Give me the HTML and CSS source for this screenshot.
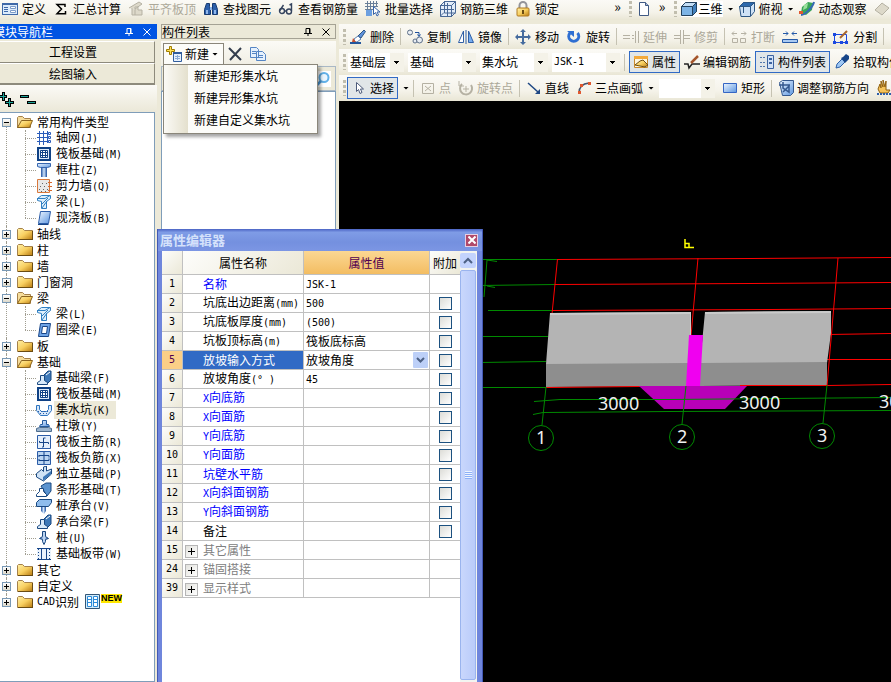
FILE: index.html
```html
<!DOCTYPE html>
<html lang="zh-CN">
<head>
    <meta charset="UTF-8">
    <meta name="viewport" content="width=device-width, initial-scale=1.0">
    <title>钢筋算量 - 绘图输入</title>
    <link rel="stylesheet" href="styles.css">
</head>
<body>
    <!-- 图标 -->
    <svg class="sprite" aria-hidden="true">
        <defs>
            <linearGradient id="gold" x2="1" y2="1"><stop offset="0" stop-color="#fff0a8"/><stop offset=".5" stop-color="#f8cf60"/><stop offset="1" stop-color="#b87a10"/></linearGradient>
            <linearGradient id="blue" x2="1" y2="1"><stop offset="0" stop-color="#eef6ff"/><stop offset="1" stop-color="#5c96e0"/></linearGradient>
            <linearGradient id="deep" x2="1"><stop offset="0" stop-color="#1c4fa0"/><stop offset=".5" stop-color="#cfe4fb"/><stop offset="1" stop-color="#1c4fa0"/></linearGradient>
        </defs>
        <symbol id="define" viewBox="0 0 16 16"><path fill="#3f69a8" d="M0 2h16v12H0z"/><path fill="#dcebfb" d="M1 4h14v9H1z"/><path stroke="#3f69a8" d="M2 6.500h4M2 8.500h4M2 10.500h4M8 6.500h6M8 10.500h6"/><path fill="#fff" stroke="#7d9cc8" d="M8.500 5.500h5v2h-5zM8.500 9.500h5v2h-5z"/></symbol>
        <symbol id="sum" viewBox="0 0 16 16"><path fill="none" stroke="#000" stroke-width="1.500" d="M12 6V3.500H4L8.500 8 4 12.800h8.500V10"/></symbol>
        <symbol id="flush" viewBox="0 0 16 16"><path fill="#ddd9ca" stroke="#b5b1a3" d="M1 7l10-6 3 2-7 5M4 7v7h10V9h-4V6H7v3M7 9v5"/></symbol>
        <symbol id="find" viewBox="0 0 16 16"><path fill="#2c5faa" stroke="#173a70" d="M3.500 2.500h3v3l1 3v5h-6v-5zM9.500 2.500h3l2 6v5h-5v-5z"/><path fill="#8fb6ea" d="M3 9h2v4H3zM11 9h2v4h-2zM7 6h2v3H7z"/></symbol>
        <symbol id="glasses" viewBox="0 0 16 16"><g fill="none" stroke="#34435e" stroke-width="1.400"><circle cx="4" cy="10" r="2.500"/><circle cx="11" cy="10.500" r="2.500"/><path d="M1.500 10l4-6M6.500 10h2M13.500 10V3l-2 1"/></g></symbol>
        <symbol id="batch" viewBox="0 0 16 16"><path fill="none" stroke="#6a7f98" d="M0 2.500h13M0 5.500h13M0 8.500h8M2.500 0v12M5.500 0v12M8.500 0v6M11.500 0v6"/><path fill="#6c9fe0" d="M1 9h6v6H1z"/><path fill="#fff" stroke="#3864a8" d="M8.500 5.500v8l2-2 1.500 3.500 1.500-1-1.500-3h3z"/></symbol>
        <symbol id="rebar3d" viewBox="0 0 16 16"><path fill="#e3edf9" stroke="#476795" d="M.5 4.500l4-4h11v11l-4 4H.5z"/><path fill="none" stroke="#476795" d="M0 4.500h11.500V16M11.500 4.500l4-4M4.500 0v12H16M0 15.500l4-4M7.500 2v14M0 8.500h14"/></symbol>
        <symbol id="lock" viewBox="0 0 16 16"><path fill="none" stroke="#94949a" stroke-width="2" d="M4.500 8V4.500a3.500 3.500 0 0 1 7 0V8"/><rect x="2" y="7" width="12" height="8" rx="1" fill="url(#gold)" stroke="#b07a20"/><path fill="#6b4c12" d="M7 9h2v4H7z"/></symbol>
        <symbol id="page" viewBox="0 0 16 16"><path fill="#fff" stroke="#405a84" d="M3.500 1.500h6l3 3v10h-9z"/><path fill="#a9bbd8" stroke="#405a84" d="M9.500 1.500v3h3"/></symbol>
        <symbol id="cube" viewBox="0 0 16 16"><path fill="#7db4e6" stroke="#24425f" d="M.5 5.500l4-4h11v9l-4 4H.5z"/><path fill="#4381bd" stroke="#24425f" d="M11.500 5.500l4-4v9l-4 4z"/><path fill="#c3def6" stroke="#24425f" d="M.5 5.500l4-4h11l-4 4z"/></symbol>
        <symbol id="top" viewBox="0 0 16 16"><path fill="#cfe2f6" stroke="#2c5684" d="M.5 5.500l4-4h11v9l-4 5H2z"/><path fill="#2c68ac" stroke="#2c5684" d="M.5 5.500l4-4h11l-4 4z"/><path fill="none" stroke="#2c5684" d="M11.500 5.500V15M4.500 6v6"/></symbol>
        <symbol id="orbit" viewBox="0 0 16 16"><path fill="#3aa657" d="M3 6l6-5 5 1-1 7-6 5-5-2z"/><path fill="#9be09c" d="M5 4l4-2-1 5-4 2z"/><path fill="none" stroke="#3569b4" stroke-width="2" d="M2 14C6 14 14 6 15 1"/><path fill="#e05a30" d="M0 10h4v3H0z"/></symbol>
        <symbol id="grey" viewBox="0 0 16 16"><path fill="#ddd9ca" stroke="#b5b1a3" d="M1 9l7-7 7 5-7 7z"/></symbol>
        <symbol id="erase" viewBox="0 0 16 16"><path fill="#5f92dd" stroke="#2c5684" d="M8 7l6-6 1.500 1.500L11 9z"/><path fill="#fff" stroke="#5a7fb0" d="M4 10l4-3 3 3-4 3H5z"/><path fill="#c9502e" d="M3 9l3 4H2z"/><path stroke="#24569c" stroke-width="2" d="M0 14h11"/></symbol>
        <symbol id="copyobj" viewBox="0 0 16 16"><g fill="#e9edf2" stroke="#5c6f88"><circle cx="3" cy="3.500" r="2.500"/><circle cx="8" cy="12" r="2"/><circle cx="12.500" cy="11" r="3"/></g><path fill="none" stroke="#1d4f9b" d="M8 3.500h4V7M10.500 5.500l1.500 2 1.500-2"/></symbol>
        <symbol id="mirror" viewBox="0 0 16 16"><path fill="#fff" stroke="#2f5fa6" d="M5.500 2v11.500h-5z"/><path fill="#78aef0" stroke="#2f5fa6" d="M10.500 2v11.500h5z"/><path stroke="#2f5fa6" d="M8 1v14"/></symbol>
        <symbol id="move" viewBox="0 0 16 16"><path fill="#456b9e" d="M8 0l3 3H9v4h4V5l3 3-3 3V9H9v4h2l-3 3-3-3h2V9H3v2L0 8l3-3v2h4V3H5z"/></symbol>
        <symbol id="rotate" viewBox="0 0 16 16"><path fill="none" stroke="#2f6fd2" stroke-width="3" d="M4 4a5 5 0 1 0 7.500 0"/><path fill="#2f6fd2" d="M1 2h7v6z"/></symbol>
        <symbol id="extend" viewBox="0 0 16 16"><path fill="none" stroke="#b5b1a3" d="M0 6.500h7M0 9.500h7M9 6.500h2M9 9.500h2M12.500 2v12M15.500 2v12"/></symbol>
        <symbol id="trim" viewBox="0 0 16 16"><path fill="none" stroke="#b5b1a3" d="M0 6.500h6M0 9.500h6M6.500 1v14M9.500 1v14M10 6.500h6M10 9.500h6"/></symbol>
        <symbol id="break" viewBox="0 0 16 16"><path fill="none" stroke="#b5b1a3" d="M1 4.500h5M3 2.500l-2 2 2 2M10 4.500h5M13 2.500l2 2-2 2M1.500 9.500h5v4h-5zM9.500 9.500h5v4h-5z"/></symbol>
        <symbol id="join" viewBox="0 0 16 16"><path fill="none" stroke="#2459a8" d="M1 4.500h5M4 2.500l2 2-2 2M10 4.500h5M12 2.500l-2 2 2 2"/><path fill="#a9caf2" stroke="#2459a8" d="M.5 10.500h15v3H.5z"/></symbol>
        <symbol id="split" viewBox="0 0 16 16"><path fill="none" stroke="#1a48e0" d="M1.500 5.500h12v8h-12z"/><path fill="#1a48e0" d="M0 4h3v3H0zM0 12h3v3H0zM12 12h3v3h-3zM7 12h3v3H7z"/><path stroke="#a8662d" stroke-width="2" d="M7 9l7-7"/></symbol>
        <symbol id="prop" viewBox="0 0 16 16"><path fill="#fff7df" stroke="#c98a2c" d="M1.500 2.500h13v11h-13z"/><path fill="#f3aa3c" d="M1 2h14v3H1z"/><path fill="url(#gold)" stroke="#6d4d13" d="M2 11l5-4 3-1 5 5-3 2z"/></symbol>
        <symbol id="editbar" viewBox="0 0 16 16"><path fill="none" stroke="#222" stroke-width="1.500" d="M0 10h4l1 4 3-4h8"/><path stroke="#a5562c" stroke-width="2.500" d="M7 9l7-7"/></symbol>
        <symbol id="list" viewBox="0 0 16 16"><path fill="none" stroke="#5077ad" stroke-dasharray="2 1" d="M1 3.500h6M1 8.500h6M1 12.500h6"/><path fill="#cfe1f8" stroke="#3a62a0" d="M8.500 1.500h6v13h-6z"/><path stroke="#3a62a0" stroke-width="2" d="M10 5h3M10 9h3"/></symbol>
        <symbol id="pick" viewBox="0 0 16 16"><path fill="#9fc8f4" stroke="#2b5fa8" d="M2 14l1-4 5-5 3 3-5 5z"/><path fill="#174588" d="M7 4l2-1 3-3 3 2v3l-3 3-1 1z"/></symbol>
        <symbol id="arrow" viewBox="0 0 16 16"><path fill="#fff" stroke="#4d5b7a" d="M5.500 2.500v9l2-2 1.500 4 2-1-1.500-3.500h3z"/></symbol>
        <symbol id="point" viewBox="0 0 16 16"><path fill="none" stroke="#b5b1a3" d="M2.500 3.500h11v10h-11zM5 6l6 5M11 6l-6 5"/></symbol>
        <symbol id="rotpoint" viewBox="0 0 16 16"><path fill="none" stroke="#b5b1a3" stroke-width="2" d="M4 4a6 6 0 1 0 9 1"/><path fill="none" stroke="#b5b1a3" d="M1 1v5h5M8 6v6M5 9h6"/></symbol>
        <symbol id="line" viewBox="0 0 16 16"><path stroke="#1e4784" stroke-width="1.500" d="M2 3l10 9"/><path fill="#1e4784" d="M14 14H9l5-5z"/></symbol>
        <symbol id="arc" viewBox="0 0 16 16"><path fill="none" stroke="#46536c" stroke-width="1.500" d="M3 13q0-9 10-10"/><path fill="#e0582f" d="M2 11h3v3H2zM4 4h3v3H4zM12 2h3v3h-3z"/></symbol>
        <symbol id="rect" viewBox="0 0 16 16"><path fill="url(#blue)" stroke="#3465c4" d="M1.500 3.500h13v9h-13z"/></symbol>
        <symbol id="dir" viewBox="0 0 16 16"><path fill="url(#blue)" stroke="#34588e" d="M1.500 2.500l3-2h11v12l-3 3h-8z"/><path fill="none" stroke="#34588e" stroke-width="1.500" d="M1 5h11M5 2v6l6 4V6L5 12"/></symbol>
        <symbol id="hand" viewBox="0 0 16 16"><path fill="#f6c35a" stroke="#8f6010" d="M2 9l2-5 1 4V1l2 6V0l2 7 1-6v9h4l-2 3H4z"/><path stroke="#2e5ea8" stroke-dasharray="2 1" stroke-width="2" d="M1 14h14"/></symbol>
        <symbol id="pin" viewBox="0 0 8 8"><path fill="none" stroke="currentColor" d="M2 5V.5h4V5M5.500 1v4M0 5.500h8M4 6v2"/></symbol>
        <symbol id="x" viewBox="0 0 8 8"><path stroke="currentColor" d="M.5.5l7 7M7.500.5l-7 7"/></symbol>
        <symbol id="new" viewBox="0 0 16 16"><path fill="#ffe35a" stroke="#a07c00" d="M3.500.5h2v3h3v2h-3v3h-2v-3h-3v-2h3z"/><path fill="#e6f0fc" stroke="#315d9e" d="M7.500 6.500h8v9h-8z"/><path fill="#315d9e" d="M7 6h9v2H7z"/><path stroke="#8aacd8" d="M9 10.500h5M9 12.500h5M11.500 9v5"/></symbol>
        <symbol id="del" viewBox="0 0 16 16"><path fill="none" stroke="#333d4d" stroke-width="2" d="M2 2l12 12M14 2L3 14"/></symbol>
        <symbol id="copy" viewBox="0 0 16 16"><path fill="#e6f1fd" stroke="#5585c4" d="M.5 1.500h6l2 2v8h-8zM6.500 5.500h6l3 3v6h-9z"/><path stroke="#5585c4" d="M2 5.500h4M2 7.500h4M8 9.500h5M8 11.500h5"/></symbol>
        <symbol id="search" viewBox="0 0 16 16"><circle cx="9" cy="6.500" r="4.500" fill="#eaf6ff" stroke="#62b1e8" stroke-width="2"/><path stroke="#4a9ad8" stroke-width="2.500" d="M6 10l-4 4"/></symbol>
        <symbol id="expand" viewBox="0 0 16 16"><path stroke="#000" stroke-width="3" d="M0 5.500h8M4.500 1v9M6 11.500h9M10.500 7v9"/><path stroke="#1ba397" d="M1 5.500h6M4.500 2v7M7 11.500h7M10.500 8v7"/></symbol>
        <symbol id="collapse" viewBox="0 0 16 16"><path stroke="#000" stroke-width="3" d="M0 5.500h9M7 11.500h9"/><path stroke="#1ba397" d="M1 5.500h7M8 11.500h7"/></symbol>
        <symbol id="folder" viewBox="0 0 16 16"><path fill="url(#gold)" stroke="#a5814a" d="M.5 13.500v-10l1-1h4l2 2h8v9z"/><path stroke="#6b4c12" d="M1 13.500h15M15.500 5v9"/></symbol>
        <symbol id="open" viewBox="0 0 16 16"><path fill="#f6dd9c" stroke="#a5814a" d="M.5 13.500v-10l1-1h4l2 2h6v9z"/><path fill="url(#gold)" stroke="#8b6420" d="M.5 13.500l4-7h11l-3 7z"/></symbol>
        <symbol id="grid" viewBox="0 0 16 16"><path stroke="#2b5dba" d="M1 3.500h12M1 7.500h12M1 11.500h12M3.500 1v14M7.500 1v14M11.500 1v12"/><path fill="#fff" stroke="#2b5dba" d="M12.500 2.500h2v2h-2zM12.500 6.500h2v2h-2zM12.500 10.500h2v2h-2z"/></symbol>
        <symbol id="raft" viewBox="0 0 16 16"><path fill="#dbe9f8" stroke="#0f4185" stroke-width="2" d="M2 2h12v12H2z"/><path fill="#fff" stroke="#0f4185" d="M4.500 4.500h7v7h-7z"/><path fill="none" stroke="#0f4185" d="M4 6.500h8M4 9.500h8M6.500 4v8M9.500 4v8"/></symbol>
        <symbol id="column" viewBox="0 0 16 16"><path fill="url(#blue)" stroke="#3565af" d="M1.500 1.500h13v3l-3 1h-7l-3-1z"/><path fill="url(#deep)" d="M5 6h6v9H5z"/></symbol>
        <symbol id="wall" viewBox="0 0 16 16"><path fill="#e9e9e9" stroke="#d9783c" d="M1.500 1.500h12v13h-12z"/><path stroke="#666" stroke-dasharray="1 3" d="M6 5.500h6M4 8.500h8M3 11.500h9M5 13.500h7"/><path stroke="#d96a2c" d="M12 4.500h4M12 8.500h4M12 12.500h4"/></symbol>
        <symbol id="beam" viewBox="0 0 16 16"><path fill="#dff0fc" stroke="#2f7fc2" d="M1.500 4.500l4-3h9v3l-4 3v7h-5v-7l-4-1z"/><path fill="none" stroke="#2f7fc2" d="M1 4.500h8l5-3M6 14l5-7M6 10l6-6"/></symbol>
        <symbol id="slab" viewBox="0 0 16 16"><path fill="url(#blue)" stroke="#2b5ca8" d="M4.500 1.500h10l-2 12h-10z"/><path fill="none" stroke="#174588" d="M2 14.500h10.500"/></symbol>
        <symbol id="ring" viewBox="0 0 16 16"><path fill="#6fa4e6" stroke="#174588" d="M4.500 1.500h10l-2 13h-10z"/><path fill="#fff" stroke="#174588" d="M6.500 4.500h5l-1 7h-5z"/></symbol>
        <symbol id="fbeam" viewBox="0 0 16 16"><path fill="#3d78b8" stroke="#1a4880" d="M6 7l6-6h3v9l-5 5z"/><path fill="#d9eafa" stroke="#1a4880" d="M1.500 14.500v-2l3-2v-5h4v5l3 2v2z"/><path stroke="#fff" d="M10 5l4-3"/></symbol>
        <symbol id="pit" viewBox="0 0 16 16"><path fill="#d7e8f9" stroke="#2e74c0" d="M.5 3.500h3v4l2 2h5l2-2v-4h3v5l-4 5h-7l-4-5z"/><path stroke="#2e5ea8" stroke-dasharray="1 2" d="M2 9.500h12M4 11.500h8"/></symbol>
        <symbol id="pier" viewBox="0 0 16 16"><path fill="url(#blue)" stroke="#235a9e" d="M6.500 2.500h4v4h2l1 2h-10l1-2h2z"/><path fill="#9db6d0" stroke="#4e6d8e" d="M.5 13.500v-3l3-1h9l3 1v3z"/></symbol>
        <symbol id="mainbar" viewBox="0 0 16 16"><path fill="#e5effb" stroke="#2b5ca8" d="M1.500 1.500h13v13h-13z"/><path fill="none" stroke="#174588" d="M3.500 7v1.500h9V10M9.500 4h-2v9H6"/></symbol>
        <symbol id="negbar" viewBox="0 0 16 16"><path fill="#bcd6f2" stroke="#2b5ca8" d="M1.500 1.500h13v13h-13z"/><path fill="none" stroke="#174588" d="M8 2v12M3 5.500h10v2M3 10.500h10v-2M3 5v2M3 9v2"/></symbol>
        <symbol id="single" viewBox="0 0 16 16"><path fill="#cfe2f5" stroke="#1a4880" d="M.5 7.500l5-4 2 2V1l3-1v5l5-2v5l-8 7-7-4z"/><path fill="#3d78b8" d="M7 11l8-6v3l-8 7z"/></symbol>
        <symbol id="strip" viewBox="0 0 16 16"><path fill="#5b93cf" stroke="#1a4880" d="M5 4l5-3h5v8l-4 5z"/><path fill="#fff" stroke="#1a4880" d="M.5 14.500v-2l3-3v-3h4v3l3 3v2z"/></symbol>
        <symbol id="cap" viewBox="0 0 16 16"><path fill="#8fbcec" stroke="#1a4880" d="M.5 4.500l3-3h12v3l-3 4H.5z"/><path fill="url(#deep)" d="M5 9h5v4l-2 3-3-3z"/></symbol>
        <symbol id="pile" viewBox="0 0 16 16"><path fill="url(#deep)" stroke="#1a4880" d="M6.500 1.500h3v5l3 2-3 1v2l-1.500 3-1.500-3v-2l-3-1 3-2z"/></symbol>
        <symbol id="band" viewBox="0 0 16 16"><path fill="#e9f2fc" d="M1 3h14v10H1z"/><path fill="none" stroke="#174588" d="M1 2.500h14M1 13.500h14M5.500 3v10M10.500 3v10"/><path stroke="#174588" stroke-dasharray="1 2" d="M2.500 3v10M13.500 3v10"/></symbol>
        <symbol id="cad" viewBox="0 0 16 16"><path fill="#d3ecfb" stroke="#345676" d="M.5.5h14v14H.5z"/><path fill="#fff" stroke="#2c8ad8" d="M2.500 2.500h4v10h-4zM8.500 2.500h4v10h-4z"/><path stroke="#2c8ad8" d="M3 5.500h3M3 8.500h3M9 5.500h3M9 8.500h3"/></symbol>
    </svg>

    <header class="top-bar">
        <div class="toolbar">
            <button><svg><use href="#define"/></svg>定义</button>
            <button><svg><use href="#sum"/></svg>汇总计算</button>
            <button disabled><svg><use href="#flush"/></svg>平齐板顶</button>
            <button><svg><use href="#find"/></svg>查找图元</button>
            <button><svg><use href="#glasses"/></svg>查看钢筋量</button>
            <button><svg><use href="#batch"/></svg>批量选择</button>
            <button><svg><use href="#rebar3d"/></svg>钢筋三维</button>
            <button><svg><use href="#lock"/></svg>锁定</button>
            <button class="more" aria-label="更多">»</button>
        </div>
        <div class="toolbar file-bar">
            <i class="grip"></i>
            <button aria-label="新建文件"><svg><use href="#page"/></svg></button>
            <button class="more" aria-label="更多">»</button>
        </div>
        <div class="toolbar view-bar">
            <i class="grip"></i>
            <button class="white"><svg><use href="#cube"/></svg>三维</button>
            <i class="caret"></i>
            <button><svg><use href="#top"/></svg>俯视</button>
            <i class="caret"></i>
            <button><svg><use href="#orbit"/></svg>动态观察</button>
            <button disabled aria-label="平移"><svg><use href="#grey"/></svg></button>
        </div>
    </header>

    <div class="main">
        <aside class="nav">
            <div class="panel-title active">模块导航栏
                <svg class="tiny"><use href="#pin"/></svg><svg class="tiny"><use href="#x"/></svg>
            </div>
            <button class="nav-btn">工程设置</button>
            <button class="nav-btn pressed">绘图输入</button>
            <div class="nav-tools">
                <button aria-label="全部展开"><svg><use href="#expand"/></svg></button>
                <button aria-label="全部折叠"><svg><use href="#collapse"/></svg></button>
            </div>
            <ul class="tree">
                <li><div class="row"><button class="box minus" aria-label="折叠"></button><svg><use href="#open"/></svg>常用构件类型</div>
                    <ul>
                        <li><svg><use href="#grid"/></svg><span>轴网<small>(J)</small></span></li>
                        <li><svg><use href="#raft"/></svg><span>筏板基础<small>(M)</small></span></li>
                        <li><svg><use href="#column"/></svg><span>框柱<small>(Z)</small></span></li>
                        <li><svg><use href="#wall"/></svg><span>剪力墙<small>(Q)</small></span></li>
                        <li><svg><use href="#beam"/></svg><span>梁<small>(L)</small></span></li>
                        <li><svg><use href="#slab"/></svg><span>现浇板<small>(B)</small></span></li>
                    </ul>
                </li>
                <li><div class="row"><button class="box" aria-label="展开"></button><svg><use href="#folder"/></svg>轴线</div></li>
                <li><div class="row"><button class="box" aria-label="展开"></button><svg><use href="#folder"/></svg>柱</div></li>
                <li><div class="row"><button class="box" aria-label="展开"></button><svg><use href="#folder"/></svg>墙</div></li>
                <li><div class="row"><button class="box" aria-label="展开"></button><svg><use href="#folder"/></svg>门窗洞</div></li>
                <li><div class="row"><button class="box minus" aria-label="折叠"></button><svg><use href="#open"/></svg>梁</div>
                    <ul>
                        <li><svg><use href="#beam"/></svg><span>梁<small>(L)</small></span></li>
                        <li><svg><use href="#ring"/></svg><span>圈梁<small>(E)</small></span></li>
                    </ul>
                </li>
                <li><div class="row"><button class="box" aria-label="展开"></button><svg><use href="#folder"/></svg>板</div></li>
                <li><div class="row"><button class="box minus" aria-label="折叠"></button><svg><use href="#open"/></svg>基础</div>
                    <ul>
                        <li><svg><use href="#fbeam"/></svg><span>基础梁<small>(F)</small></span></li>
                        <li><svg><use href="#raft"/></svg><span>筏板基础<small>(M)</small></span></li>
                        <li><svg><use href="#pit"/></svg><span class="current">集水坑<small>(K)</small></span></li>
                        <li><svg><use href="#pier"/></svg><span>柱墩<small>(Y)</small></span></li>
                        <li><svg><use href="#mainbar"/></svg><span>筏板主筋<small>(R)</small></span></li>
                        <li><svg><use href="#negbar"/></svg><span>筏板负筋<small>(X)</small></span></li>
                        <li><svg><use href="#single"/></svg><span>独立基础<small>(P)</small></span></li>
                        <li><svg><use href="#strip"/></svg><span>条形基础<small>(T)</small></span></li>
                        <li><svg><use href="#cap"/></svg><span>桩承台<small>(V)</small></span></li>
                        <li><svg><use href="#fbeam"/></svg><span>承台梁<small>(F)</small></span></li>
                        <li><svg><use href="#pile"/></svg><span>桩<small>(U)</small></span></li>
                        <li><svg><use href="#band"/></svg><span>基础板带<small>(W)</small></span></li>
                    </ul>
                </li>
                <li><div class="row"><button class="box" aria-label="展开"></button><svg><use href="#folder"/></svg>其它</div></li>
                <li><div class="row"><button class="box" aria-label="展开"></button><svg><use href="#folder"/></svg>自定义</div></li>
                <li><div class="row"><button class="box" aria-label="展开"></button><svg><use href="#folder"/></svg><small>CAD</small>识别<svg class="cad"><use href="#cad"/></svg><b class="new">NEW</b></div></li>
            </ul>
        </aside>

        <section class="parts">
            <div class="panel-title">构件列表
                <svg class="tiny"><use href="#pin"/></svg><svg class="tiny"><use href="#x"/></svg>
            </div>
            <div class="parts-tools">
                <div class="new-wrap">
                    <button class="new-btn"><svg><use href="#new"/></svg>新建<i class="caret"></i></button>
                    <div class="menu">
                        <button>新建矩形集水坑</button>
                        <button>新建异形集水坑</button>
                        <button>新建自定义集水坑</button>
                    </div>
                </div>
                <button aria-label="删除"><svg><use href="#del"/></svg></button>
                <button aria-label="复制"><svg><use href="#copy"/></svg></button>
            </div>
            <div class="search">
                <input type="text" aria-label="搜索构件">
                <button aria-label="搜索"><svg><use href="#search"/></svg></button>
            </div>
            <div class="parts-list"></div>
        </section>

        <section class="work">
            <div class="toolbar edit-bar">
                <i class="grip"></i>
                <button><svg><use href="#erase"/></svg>删除</button>
                <i class="sep"></i>
                <button><svg><use href="#copyobj"/></svg>复制</button>
                <button><svg><use href="#mirror"/></svg>镜像</button>
                <i class="sep"></i>
                <button><svg><use href="#move"/></svg>移动</button>
                <button><svg><use href="#rotate"/></svg>旋转</button>
                <i class="sep"></i>
                <button disabled><svg><use href="#extend"/></svg>延伸</button>
                <button disabled><svg><use href="#trim"/></svg>修剪</button>
                <i class="sep"></i>
                <button disabled><svg><use href="#break"/></svg>打断</button>
                <button><svg><use href="#join"/></svg>合并</button>
                <button><svg><use href="#split"/></svg>分割</button>
                <i class="sep"></i>
            </div>
            <div class="toolbar select-bar">
                <i class="grip"></i>
                <select class="short" aria-label="楼层"><option>基础层</option></select>
                <select aria-label="构件分类"><option>基础</option></select>
                <select aria-label="构件类型"><option>集水坑</option></select>
                <select class="mono" aria-label="构件名称"><option>JSK-1</option></select>
                <i class="sep"></i>
                <button class="on"><svg><use href="#prop"/></svg>属性</button>
                <button><svg><use href="#editbar"/></svg>编辑钢筋</button>
                <button class="on"><svg><use href="#list"/></svg>构件列表</button>
                <button><svg><use href="#pick"/></svg>拾取构件</button>
            </div>
            <div class="toolbar draw-bar">
                <i class="grip"></i>
                <button class="on"><svg><use href="#arrow"/></svg>选择</button>
                <i class="caret"></i>
                <i class="sep"></i>
                <button disabled><svg><use href="#point"/></svg>点</button>
                <button disabled><svg><use href="#rotpoint"/></svg>旋转点</button>
                <i class="sep"></i>
                <button><svg><use href="#line"/></svg>直线</button>
                <button><svg><use href="#arc"/></svg>三点画弧</button>
                <i class="caret"></i>
                <select class="short" aria-label="绘制参数"><option></option></select>
                <button><svg><use href="#rect"/></svg>矩形</button>
                <i class="sep"></i>
                <button><svg><use href="#dir"/></svg>调整钢筋方向</button>
                <button aria-label="平移"><svg><use href="#hand"/></svg></button>
            </div>

            <!-- 三维视图 -->
            <div class="view">
                <svg viewBox="339 101 552 581" preserveAspectRatio="xMinYMin slice">
                    <g fill="none" stroke="#008a00">
                        <path d="M480 259.500H557M480 285.500L555 284.500M488 310.500H552M480 336.500H548M480 362.500L546 361.500M480 387.500H546M487 260l-2 25-1 12M487 260l10 1.500M487 286l8 1.500"/>
                    </g>
                    <g fill="none" stroke="#f00">
                        <path d="M557 259.500L751 258.500 891 257.500M555 284.500L751 283.500 891 282.500M552 310.500L771 309.500 891 308.500M828 334.500L891 333.500M827 359.500H891M827 385.500L891 384.500"/>
                        <path d="M557.500 259L552 314M698 258L691 336"/>
                    </g>
                    <path fill="#b4b4b4" d="M550 313L691 312 691 335 688 364 546 364zM705 312L831 311 831 333 827 363 700 364z"/>
                    <path fill="#8e8e8e" d="M546 364L688 363V386L546 387zM700 363L827 362V385L700 386z"/>
                    <path fill="none" stroke="#cacaca" stroke-width="2" d="M550 314L690 313M705 313L831 312"/>
                    <path fill="none" stroke="#cacaca" d="M690.500 312v23"/>
                    <path fill="none" stroke="#f00" d="M838 258L827 386M546 387.500L640 386.500M740 385.500H827"/>
                    <path fill="#f000f0" d="M689 335h14l-3 51h-14z"/>
                    <path fill="#b800b8" d="M639 386h108l-22 23h-61z"/>
                    <g fill="none" stroke="#008a00">
                        <path d="M534 401.500L560 399.500H670L891 397.500M533 414.500L543 412.500 670 411.500 891 410.500"/>
                        <path d="M546 387l-4 38M686 386l-4 38M827 385l-4 38"/>
                        <circle cx="541" cy="438" r="12.500"/>
                        <circle cx="682" cy="437" r="12.500"/>
                        <circle cx="822" cy="436" r="12.500"/>
                    </g>
                    <path fill="none" stroke="#ff0" stroke-width="1.500" d="M685 239v8.500h9M685 243.500h4v4"/>
                    <g class="dims">
                        <text x="598" y="410">3000</text>
                        <text x="739" y="409">3000</text>
                        <text x="879" y="408">3000</text>
                        <text x="536" y="444">1</text>
                        <text x="677" y="443">2</text>
                        <text x="817" y="442">3</text>
                    </g>
                </svg>
            </div>
        </section>
    </div>

    <!-- 浮动的属性编辑器 -->
    <div class="editor">
        <div class="editor-title">属性编辑器<button aria-label="关闭"><svg class="tiny"><use href="#x"/></svg></button></div>
        <div class="editor-body">
            <div class="sheet">
                <table>
                    <thead>
                        <tr><th class="no"></th><th class="name">属性名称</th><th class="value">属性值</th><th class="extra">附加</th></tr>
                    </thead>
                    <tbody>
                        <tr><th>1</th><td class="key">名称</td><td><small>JSK-1</small></td><td></td></tr>
                        <tr><th>2</th><td>坑底出边距离<small>(mm)</small></td><td><small>500</small></td><td><input type="checkbox" aria-label="坑底出边距离"></td></tr>
                        <tr><th>3</th><td>坑底板厚度<small>(mm)</small></td><td><small>(500)</small></td><td><input type="checkbox" aria-label="坑底板厚度"></td></tr>
                        <tr><th>4</th><td>坑板顶标高<small>(m)</small></td><td>筏板底标高</td><td><input type="checkbox" aria-label="坑板顶标高"></td></tr>
                        <tr class="selected"><th>5</th><td>放坡输入方式</td><td><select aria-label="放坡输入方式"><option>放坡角度</option></select></td><td><input type="checkbox" aria-label="附加放坡输入方式"></td></tr>
                        <tr><th>6</th><td>放坡角度<small>(° )</small></td><td><small>45</small></td><td><input type="checkbox" aria-label="放坡角度"></td></tr>
                        <tr><th>7</th><td class="key"><small>X</small>向底筋</td><td></td><td><input type="checkbox" aria-label="X向底筋"></td></tr>
                        <tr><th>8</th><td class="key"><small>X</small>向面筋</td><td></td><td><input type="checkbox" aria-label="X向面筋"></td></tr>
                        <tr><th>9</th><td class="key"><small>Y</small>向底筋</td><td></td><td><input type="checkbox" aria-label="Y向底筋"></td></tr>
                        <tr><th>10</th><td class="key"><small>Y</small>向面筋</td><td></td><td><input type="checkbox" aria-label="Y向面筋"></td></tr>
                        <tr><th>11</th><td class="key">坑壁水平筋</td><td></td><td><input type="checkbox" aria-label="坑壁水平筋"></td></tr>
                        <tr><th>12</th><td class="key"><small>X</small>向斜面钢筋</td><td></td><td><input type="checkbox" aria-label="X向斜面钢筋"></td></tr>
                        <tr><th>13</th><td class="key"><small>Y</small>向斜面钢筋</td><td></td><td><input type="checkbox" aria-label="Y向斜面钢筋"></td></tr>
                        <tr><th>14</th><td>备注</td><td></td><td><input type="checkbox" aria-label="备注"></td></tr>
                        <tr><th>15</th><td class="group"><button class="plus" aria-label="展开"></button>其它属性</td><td></td><td></td></tr>
                        <tr><th>24</th><td class="group"><button class="plus" aria-label="展开"></button>锚固搭接</td><td></td><td></td></tr>
                        <tr><th>39</th><td class="group"><button class="plus" aria-label="展开"></button>显示样式</td><td></td><td></td></tr>
                    </tbody>
                </table>
            </div>
            <div class="scroll">
                <button class="up" aria-label="向上滚动"></button>
                <div class="thumb"></div>
            </div>
        </div>
    </div>
</body>
</html>
```
FILE: styles.css
```css
* {
    margin: 0;
    padding: 0;
    box-sizing: border-box;
}

body {
    height: 100vh;
    display: flex;
    flex-direction: column;
    overflow: hidden;
    position: relative;
    background: #ece9d8;
    color: #000;
    font: 12px/16px "Noto Sans CJK SC", sans-serif;
}

button,
select,
input {
    font: inherit;
    color: inherit;
    border: none;
    background: none;
    white-space: nowrap;
}

small,
.toolbar .mono {
    font-family: "DejaVu Sans Mono", monospace;
    font-size: 10px;
}

svg {
    width: 16px;
    height: 16px;
    flex: none;
}

svg.tiny {
    width: 8px;
    height: 8px;
}

.sprite {
    position: absolute;
    width: 0;
    height: 0;
}

/* 工具栏 */
.top-bar {
    display: flex;
    height: 24px;
    flex: none;
}

.toolbar {
    display: flex;
    align-items: center;
    gap: 7px;
    height: 26px;
    padding-left: 4px;
    flex: none;
    overflow: hidden;
    background: linear-gradient(#fbfaf6, #f5f3ea 60%, #e9e6d5);
}

.top-bar .toolbar {
    height: 20px;
    padding: 0 0 2px 2px;
}

.toolbar button {
    display: flex;
    align-items: center;
    gap: 4px;
    flex: none;
}

.toolbar button:disabled {
    color: #aca899;
}

.toolbar .more {
    align-self: flex-start;
    font-size: 14px;
    line-height: 12px;
    margin-left: 48px;
}

.file-bar .more {
    margin-left: 0;
}

.top-bar .file-bar,
.top-bar .view-bar {
    padding-left: 8px;
}

.view-bar {
    flex: 1;
}

.toolbar .white {
    gap: 2px;
    background: #fff;
}

.grip {
    width: 3px;
    height: 16px;
    margin-right: -3px;
    flex: none;
    background: repeating-linear-gradient(#c1beae 0 3px, transparent 3px 5px);
}

.sep {
    width: 1px;
    height: 17px;
    margin: 0 -1px;
    flex: none;
    background: #c5c2b2;
}

.caret {
    width: 6px;
    height: 3px;
    margin: 0 -2px;
    flex: none;
    background: #000;
    clip-path: polygon(0 0, 100% 0, 50% 100%);
}

.work .edit-bar {
    height: 25px;
}

.select-bar {
    gap: 4px;
}

.select-bar .grip {
    margin-right: -2px;
}

.select-bar .sep {
    margin: 0;
}

.select-bar button,
.draw-bar button {
    gap: 3px;
}

.draw-bar .grip {
    margin-right: -6px;
}

.toolbar .on {
    height: 22px;
    padding: 0 3px;
    border: 1px solid #316ac5;
    background: #e1e6e8;
}

.toolbar select {
    appearance: none;
    width: 68px;
    height: 19px;
    padding-left: 2px;
    flex: none;
    background: linear-gradient(#000, #000) right 5px top 8px / 5px 1px no-repeat,
        linear-gradient(#000, #000) right 6px top 9px / 3px 1px no-repeat,
        linear-gradient(#000, #000) right 7px top 10px / 1px 1px no-repeat,
        linear-gradient(#f4f2e8, #f4f2e8) right / 14px 19px no-repeat, #fff;
}

.toolbar .short {
    width: 56px;
}

/* 左侧面板 */
.main {
    flex: 1;
    display: flex;
    min-height: 0;
}

.nav {
    width: 165px;
    margin-left: -8px;
    flex: none;
    display: flex;
    flex-direction: column;
}

.panel-title {
    display: flex;
    align-items: center;
    height: 15px;
    padding-right: 5px;
    border: 1px solid #a5a294;
    line-height: 13px;
    flex: none;
}

.panel-title .tiny:first-of-type {
    margin-left: auto;
}

.panel-title .tiny + .tiny {
    margin-left: 10px;
}

.panel-title.active {
    color: #fff;
    background: #0054e3;
    border-color: #0054e3;
}

.nav-btn {
    height: 22px;
    margin-right: 2px;
    flex: none;
    background: #ece9d8;
    border-top: 1px solid #fff;
    border-right: 1px solid #8d8a7c;
    border-bottom: 1px solid #8d8a7c;
}

.nav-btn:first-of-type {
    margin-top: 2px;
}

.nav-btn.pressed {
    border-bottom-width: 2px;
}

.nav-tools {
    display: flex;
    gap: 5px;
    align-items: center;
    height: 27px;
    padding-left: 7px;
    flex: none;
    background: linear-gradient(#fbfaf6, #ebe8d8);
}

.nav-tools button {
    display: flex;
}

.tree {
    flex: 1;
    min-height: 0;
    overflow: hidden;
    margin-right: 2px;
    padding: 1px 0 0 9px;
    list-style: none;
    background: #fff;
    border: 1px solid #7f9db9;
}

.tree > li {
    position: relative;
}

/* 虚线连接 */
.tree > li::before {
    content: '';
    position: absolute;
    left: 4px;
    top: 0;
    bottom: 0;
    border-left: 1px dotted #a09d90;
}

.tree > li:first-child::before {
    top: 8px;
}

.tree > li:last-child::before {
    bottom: 8px;
}

.row {
    display: flex;
    align-items: center;
    height: 16px;
}

.row .box {
    position: relative;
    margin-right: 6px;
}

.row .box + svg {
    margin-right: 4px;
}

.box,
.plus {
    width: 9px;
    height: 9px;
    flex: none;
    border: 1px solid #7898b5;
    background: linear-gradient(#000, #000) center / 5px 1px no-repeat,
        linear-gradient(#000, #000) center / 1px 5px no-repeat,
        linear-gradient(#fff, #dcd8ca);
}

.box.minus {
    background: linear-gradient(#000, #000) center / 5px 1px no-repeat,
        linear-gradient(#fff, #dcd8ca);
}

.tree ul {
    list-style: none;
    position: relative;
    margin-left: 23px;
}

.tree ul::before {
    content: '';
    position: absolute;
    top: 0;
    bottom: 8px;
    border-left: 1px dotted #a09d90;
}

.tree ul li {
    display: flex;
    align-items: center;
    height: 16px;
}

.tree ul li::before {
    content: '';
    width: 11px;
    border-top: 1px dotted #a09d90;
}

.tree ul span {
    margin-left: 2px;
    padding: 0 6px 0 2px;
}

.tree .current {
    background: #ece9d8;
}

.row .cad {
    margin-left: 6px;
}

.new {
    align-self: flex-start;
    background: #ffe600;
    font: bold 9px/9px "Liberation Sans", sans-serif;
}

/* 构件列表 */
.parts {
    width: 175px;
    margin: 0 3px 0 4px;
    flex: none;
    display: flex;
    flex-direction: column;
}

.parts-tools {
    display: flex;
    align-items: center;
    gap: 7px;
    height: 25px;
    margin-top: 2px;
    padding-left: 2px;
    flex: none;
    background: linear-gradient(#fbfaf6, #f0eee3);
}

.parts-tools button {
    display: flex;
    align-items: center;
}

.new-wrap {
    position: relative;
    margin-right: -4px;
}

.parts-tools .new-btn {
    gap: 3px;
    height: 22px;
    padding: 0 5px 0 2px;
    background: #fcfcf9;
    border: 1px solid #8a867a;
    border-bottom: none;
}

.new-btn .caret {
    margin: 0;
}

.menu {
    position: absolute;
    z-index: 5;
    top: 21px;
    left: 0;
    width: 155px;
    padding: 0 1px 2px;
    background: linear-gradient(90deg, #fbfaf6, #e4e0cd) 0 0 / 24px 100% no-repeat, #fcfcf9;
    border: 1px solid #8a867a;
    box-shadow: 3px 3px 3px rgba(0, 0, 0, 0.35);
}

.menu button {
    width: 100%;
    height: 22px;
    padding-left: 29px;
}

.search {
    display: flex;
    align-items: center;
    height: 25px;
    padding-right: 4px;
    flex: none;
    border: 1px solid #a9b8c6;
}

.search input {
    flex: 1;
    min-width: 0;
    height: 23px;
}

.search button {
    display: flex;
    background: #fff;
}

.parts-list {
    flex: 1;
    background: #fff;
    border: 1px solid #7f9db9;
}

/* 绘图区 */
.work {
    flex: 1;
    min-width: 0;
    display: flex;
    flex-direction: column;
}

.view {
    flex: 1;
    min-height: 0;
    background: #000;
}

.view svg {
    display: block;
    width: 100%;
    height: 100%;
}

.dims {
    fill: #f0f0f0;
    font: 18px "Noto Sans", sans-serif;
}

/* 属性编辑器 */
.editor {
    position: absolute;
    left: 157px;
    top: 229px;
    bottom: 0;
    width: 326px;
    display: flex;
    flex-direction: column;
    padding: 0 5px 0 4px;
    background: #6f86dc;
    border-left: 1px solid #4358b4;
    border-right: 1px solid #4358b4;
}

.editor-title {
    display: flex;
    justify-content: space-between;
    align-items: center;
    height: 22px;
    margin: 0 -5px 0 -4px;
    padding: 0 4px 0 2px;
    flex: none;
    color: #d5e2fb;
    font-size: 13px;
    font-weight: bold;
    background: linear-gradient(#4a63c4, #7f9ce6 15%, #7490df 60%, #7c96e4);
}

.editor-title button {
    display: flex;
    align-items: center;
    justify-content: center;
    width: 13px;
    height: 13px;
    color: #fff;
    background: #b0496a;
    border: 1px solid #e6cfe2;
}

.editor-title svg {
    stroke-width: 2;
}

.editor-body {
    flex: 1;
    min-height: 0;
    display: flex;
    background: #fff;
}

.sheet {
    flex: 1;
    overflow: hidden;
}

table {
    width: 299px;
    table-layout: fixed;
    border-collapse: separate;
    border-spacing: 0;
}

th,
td {
    height: 19px;
    border-right: 1px solid #c0c0c0;
    border-bottom: 1px solid #c0c0c0;
    line-height: 16px;
    white-space: nowrap;
    overflow: hidden;
}

th {
    font-weight: normal;
    background: linear-gradient(135deg, #fdfdfb, #ebe8d7);
}

thead th {
    height: 24px;
}

tbody th {
    font: 10px/16px "DejaVu Sans Mono", monospace;
}

.no {
    width: 21px;
}

.name {
    width: 121px;
}

.value {
    width: 126px;
    color: #500050;
    background: linear-gradient(#fbd793, #f3bd62);
}

.extra {
    width: 31px;
}

td:nth-child(2) {
    padding-left: 20px;
}

td:nth-child(3) {
    padding-left: 2px;
}

td:last-child {
    text-align: center;
}

td input {
    appearance: none;
    display: block;
    width: 13px;
    height: 13px;
    margin: 0 auto;
    border: 1px solid #1c5180;
    background: linear-gradient(135deg, #dcdcd7, #fff);
}

td.key {
    color: #0000ff;
}

td.group {
    color: #808080;
    padding-left: 2px;
}

.plus {
    width: 13px;
    height: 13px;
    margin-right: 5px;
    vertical-align: -2px;
    border-color: #b5b5b5;
    background: linear-gradient(#000, #000) center / 7px 1px no-repeat,
        linear-gradient(#000, #000) center / 1px 7px no-repeat,
        linear-gradient(135deg, #e2e2dd, #fff);
}

.selected th {
    color: #500050;
    background: #fbcf87;
}

.selected td:nth-child(2) {
    color: #fff;
    background: #316ac5;
}

td select {
    appearance: none;
    display: block;
    width: 100%;
    height: 17px;
    background: url("data:image/svg+xml,%3Csvg xmlns='http://www.w3.org/2000/svg' width='15' height='16'%3E%3Crect width='15' height='16' rx='1' fill='%23bdd0f8'/%3E%3Cpath fill='none' stroke='%234d6185' stroke-width='2' d='M4 6l3.500 3.500L11 6'/%3E%3C/svg%3E") right 1px center no-repeat;
}

.scroll {
    width: 17px;
    padding: 2px 1px 2px 0;
    display: flex;
    flex-direction: column;
    gap: 2px;
    background: #f3f4f0;
}

.up {
    height: 15px;
    border-radius: 2px;
    background: url("data:image/svg+xml,%3Csvg xmlns='http://www.w3.org/2000/svg' width='10' height='8'%3E%3Cpath fill='none' stroke='%234d6185' stroke-width='2' d='M1 6l4-4 4 4'/%3E%3C/svg%3E") center no-repeat #c3d3fd;
}

.thumb {
    flex: 1;
    border: 1px solid #9ab4ee;
    border-radius: 2px;
    background: repeating-linear-gradient(#eef4fe 0 1px, #8cb0f8 1px 2px) center / 7px 8px no-repeat,
        linear-gradient(90deg, #c9d7fc, #b9cbfa);
}
```
